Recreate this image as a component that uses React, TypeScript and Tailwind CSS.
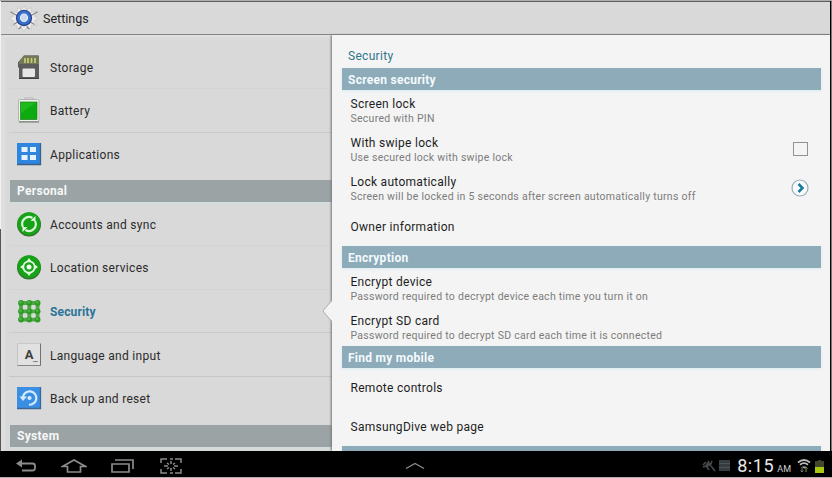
import type { ReactNode } from 'react';

const StorageIcon = () => (
  <svg width="26" height="26" viewBox="0 0 26 26">
    <path d="M8 1.500h14a1 1 0 0 1 1 1V24a1 1 0 0 1-1 1H4a1 1 0 0 1-1-1V14l-1-1V8l2-1z" fill="#5b5d5b" />
    <path d="M8 1.500h14a1 1 0 0 1 1 1V10H3V7z" fill="#73785a" />
    <path d="M9 4v5M12 4v5M15.500 4v5M19 4v5" stroke="#c9d070" strokeWidth="1.700" />
    <rect x="6.500" y="14.500" width="12.500" height="8.500" rx="1" fill="#e6e6e6" />
    <path d="M3 24.500h20" stroke="#3e3e3e" />
  </svg>
);

const BatteryIcon = () => (
  <svg width="26" height="26" viewBox="0 0 26 26">
    <path d="M9 3V1h8v2" fill="#eee" stroke="#b0b0b0" />
    <rect x="2.500" y="2.500" width="20.500" height="22" rx="1.500" fill="#eef3ee" stroke="#afb5af" />
    <path d="M3 25h20" stroke="#6d746d" />
    <rect x="4.500" y="5" width="16.500" height="17.500" fill="#0cab0f" stroke="#26791c" strokeWidth=".7" />
    <path d="M5 5.500h15L5 16z" fill="#1fba1c" />
  </svg>
);

const AppsIcon = () => (
  <svg width="26" height="26" viewBox="0 0 26 26">
    <rect x="1" y="2" width="24" height="22" fill="#2f86df" />
    <path d="M1 23.500h23.500V2" fill="none" stroke="#3d5f88" strokeWidth="1.300" />
    <path d="M5.500 6H11.500v5h-6zM14 6h6v5h-6zM5.500 14h6v5h-6zM14 14h6v5h-6z" fill="#e7f4ff" />
  </svg>
);

const SyncIcon = () => (
  <svg width="26" height="26" viewBox="0 0 26 26">
    <circle cx="13" cy="13.500" r="12" fill="#356f31" />
    <circle cx="13" cy="12.700" r="11.500" fill="#16a318" />
    <path d="M7 16A6.800 6.800 0 0 1 16.500 7M19 10A6.800 6.800 0 0 1 9.500 19" fill="none" stroke="#d9f5d3" strokeWidth="2.200" />
    <path d="M14.500 9.800L19.500 10V5zM11.500 16.200L6.500 16v5z" fill="#e5fbe0" />
  </svg>
);

const LocationIcon = () => (
  <svg width="26" height="26" viewBox="0 0 26 26">
    <circle cx="13" cy="13.500" r="12" fill="#356f31" />
    <circle cx="13" cy="12.700" r="11.500" fill="#16a318" />
    <circle cx="13" cy="13" r="5.700" fill="none" stroke="#e1f8dc" strokeWidth="1.800" />
    <circle cx="13" cy="13" r="2.500" fill="#f0fff0" />
    <path d="M13 4l2.500 3.500h-5zM13 22l2.500-3.500h-5zM4 13l3.500-2.500v5zM22 13l-3.500-2.500v5z" fill="#e1f8dc" />
  </svg>
);

const GRID = [5, 13.3, 21.6];

const SecurityIcon = () => (
  <svg width="26" height="26" viewBox="0 0 26 26">
    <path d="M5 5h17M5 13.300h17M5 21.600h17M5 5v17M13.300 5v17M21.600 5v17" stroke="#4fa845" strokeWidth="3.800" />
    {GRID.map((y) => GRID.map((x) => <circle key={`${x}-${y}`} cx={x} cy={y} r="2.900" fill="#2f9a28" />))}
    {GRID.map((y) => GRID.map((x) => <circle key={`${x}-${y}`} cx={x - 0.5} cy={y - 0.7} r="1.300" fill="#4fb544" />))}
  </svg>
);

const LanguageIcon = () => (
  <span className="relative flex h-[23px] w-[24px] items-center justify-center rounded-[1px] border-t border-r-[1.500px] border-b-[1.500px] border-l border-t-[#c9c9c9] border-r-[#707070] border-b-[#858585] border-l-[#c4c4c4] bg-[#e1e1e1] text-[13px] font-bold text-[#3f3f3f]">
    <span className="leading-none">A</span>
    <span className="absolute right-[2px] bottom-[2px] text-[7px] leading-[6px]">…</span>
  </span>
);

const BackupIcon = () => (
  <svg width="26" height="26" viewBox="0 0 26 26">
    <rect x="1" y="2" width="24" height="22" fill="#3a8ee4" />
    <path d="M1 23.500h23.500V2" fill="none" stroke="#3d6796" strokeWidth="1.300" />
    <path d="M7 12A6.700 6.700 0 1 1 13 19.700" fill="none" stroke="#d5ecff" strokeWidth="2.200" />
    <path d="M3.500 11.500h7.500L7 16z" fill="#d5ecff" />
    <circle cx="13.500" cy="13" r="2.100" fill="#d5ecff" />
  </svg>
);

const GearIcon = () => (
  <svg className="mt-[2px]" width="30" height="28" viewBox="0 0 28 28" preserveAspectRatio="none">
    <path
      d="M14 1l2.500 3.500 4-2 .5 4.500 6.500-.5-4 4.500 4 2.500-4 2.500 3 4.500-5.500-.5-.5 4.500-4-2L14 26.500 11.500 22.500l-4 2L7 20l-5.500.5 3-4.500-4-2.500 4-2.500-3.500-4.500L7.500 7 8 2.500l3.500 2z"
      fill="#ebebeb"
      stroke="#c2c2c2"
      strokeWidth=".7"
    />
    <path d="M1.500 7l6 3.500M26.500 7l-6 3.500M4 19.500l5-3M24 19.500l-5-3M9 24l2.500-2.500M19 24l-2.500-2.500" stroke="#858585" strokeWidth="1.200" />
    <ellipse cx="14" cy="13" rx="7.600" ry="8.300" fill="#27458c" />
    <ellipse cx="14" cy="12.800" rx="6.300" ry="7" fill="#3a70cf" />
    <ellipse cx="14" cy="12.800" rx="3.300" ry="3.800" fill="#cbd9ec" stroke="#e6eefa" />
  </svg>
);

type ItemProps = { icon: ReactNode; label: string; active?: boolean; tall?: boolean; low?: boolean; divider?: string };

function NavItem({ icon, label, active, tall, low, divider = 'border-[#d4d4d4]' }: ItemProps) {
  return (
    <div className={`ml-[8px] flex items-center border-b ${tall ? 'h-[44px]' : 'h-[43.500px]'} ${divider}`}>
      <span className="ml-[7px] flex w-[26px] justify-center">{icon}</span>
      <span
        className={`ml-[8px] text-[12px] whitespace-nowrap ${low ? 'pt-[3px]' : 'pt-[2px]'} ${active ? 'font-bold tracking-[0.15px] text-[#2a7398]' : 'tracking-[0.3px] text-[#2b2b2b]'}`}
      >
        {label}
      </span>
    </div>
  );
}

function NavHeading({ children }: { children: string }) {
  return (
    <div className="ml-[9px] flex h-[22px] items-center bg-[#9ba3a5] pl-[7px] text-[12px] font-bold tracking-[0.3px] text-[#f6f8f8] shadow-[0_2px_2px_#d3dde0]">
      {children}
    </div>
  );
}

function Heading({ children }: { children?: string }) {
  return (
    <div className="mr-[9px] ml-[10px] flex h-[22px] shrink-0 items-center bg-[#8dabb9] pt-[2px] pl-[6px] text-[12px] font-bold tracking-[0.27px] text-[#f4fafd] shadow-[0_1px_3px_#d9ebf2]">
      {children}
    </div>
  );
}

type PrefProps = { title: string; sub?: string; control?: ReactNode; height?: string };

function Pref({ title, sub, control, height = 'h-[39px]' }: PrefProps) {
  return (
    <div className={`flex shrink-0 items-center justify-between pr-[21px] pl-[18.500px] ${height}`}>
      <div className="whitespace-nowrap">
        <div className="text-[12px] leading-[15px] tracking-[0.29px] text-[#1e1e1e]">{title}</div>
        {sub && <div className="text-[10.500px] leading-[13px] tracking-[0.27px] text-[#7c7c7c]">{sub}</div>}
      </div>
      {control}
    </div>
  );
}

const Checkbox = () => <span className="mr-[1.500px] mb-[2px] h-[14px] w-[15px] border border-[#929292]" />;

const Chevron = () => (
  <svg className="mb-[2px]" width="18" height="18" viewBox="0 0 18 18" fill="none">
    <circle cx="9" cy="9" r="8" fill="#f7fbfc" stroke="#9aabb3" strokeWidth="1.200" />
    <path d="M7.500 5l4 4-4 4" stroke="#18799b" strokeWidth="2.500" />
  </svg>
);

function SystemBar() {
  return (
    <div className="flex h-[26px] shrink-0 items-center bg-black text-[#8b8b8b]">
      <svg className="mt-[5px] ml-[15px]" width="22" height="20" viewBox="0 0 22 20" fill="none" stroke="currentColor" strokeWidth="1.800">
        <path d="M4 6.500h13.500a2.500 2.500 0 0 1 2.500 2.500v2a2.500 2.500 0 0 1-2.500 2.500H7" />
        <path d="M7 2.500L1 6.500l6 4z" fill="currentColor" stroke="none" />
      </svg>
      <svg className="mt-[5px] ml-[24px]" width="26" height="20" viewBox="0 0 26 20" fill="none" stroke="currentColor" strokeWidth="1.700">
        <path d="M1.500 9.500L13 3l11.500 6.500h-5V15h-13V9.500z" />
      </svg>
      <svg className="mt-[5px] ml-[23px]" width="24" height="20" viewBox="0 0 24 20" fill="none" stroke="currentColor" strokeWidth="1.700">
        <path d="M2 7h17v8H2zM5 3h18v9" />
      </svg>
      <svg className="mt-[4px] ml-[25px]" width="24" height="20" viewBox="0 0 24 20" fill="none" stroke="currentColor" strokeWidth="1.500">
        <path d="M2 7V3h6M16 3h6v4M22 13v4h-6M8 17H2v-4M11 3h3M11 17h3M12 5v3M12 12v3M5 10h4M15 10h4M8 7l2 1.500M16 7l-2 1.500M8 13l2-1.500M16 13l-2-1.500" />
      </svg>
      <svg className="mt-[3px] ml-[221px]" width="22" height="10" viewBox="0 0 22 10" fill="none" stroke="currentColor" strokeWidth="1.400">
        <path d="M2 7.500L11 2.500l9 5" />
      </svg>
      <div className="mt-[4px] mr-[8px] ml-auto flex items-center">
        <svg width="30" height="16" viewBox="0 0 30 16" fill="none">
          <path d="M1 9l3-1 3-5M4 4L1 7M8 5l-3 4 2 3M9 8l4 5M10 3L8 8" stroke="#46494a" strokeWidth="1.700" />
          <path d="M17 2h11v11H17z" fill="#353d40" />
          <path d="M17 5.500h11M17 9.500h11" stroke="#4b5558" />
        </svg>
        <span className="ml-[5px] text-[18px] leading-[20px] tracking-[0.6px] text-[#e8e8e8]">8:15</span>
        <span className="mt-[6px] ml-[3px] text-[9px] leading-[10px] text-[#d0d0d0]">AM</span>
        <svg className="ml-[6px]" width="14" height="16" viewBox="0 0 14 16" fill="none">
          <path d="M1 4.500Q7-.5 13 4.500M3 6.800Q7 3.500 11 6.800" stroke="#bcbcbc" strokeWidth="1.800" />
          <path d="M5 8.500h4L7 10.500z" fill="#bcbcbc" />
          <path d="M5 9v5M3.500 12.500L5 14l1.500-1.500" stroke="#777" />
          <path d="M9 14V9M7.500 10.500L9 9l1.500 1.500" stroke="#7aa04b" />
        </svg>
        <svg className="ml-[4px]" width="9" height="13" viewBox="0 0 9 13">
          <path d="M3 0h3v1h3v6H0V1h3z" fill="#41482b" />
          <path d="M0 7h9v6H0z" fill="#a8c90e" />
        </svg>
      </div>
    </div>
  );
}

export default function App() {
  return (
    <div className="flex h-[478px] w-[832px] flex-col overflow-hidden border-t border-b border-[#aeaeae] bg-[#d9d9d9] [font-family:Roboto,'Liberation_Sans',sans-serif]">
      <div className="flex min-h-0 flex-1 overflow-hidden">
        <div className="flex w-px flex-col">
          <div className="h-[228px] bg-[#f4f4f4]" />
          <div className="flex-1 bg-[#555]" />
        </div>
        <div className="flex min-w-0 flex-1 flex-col">
          <header className="flex h-[34px] shrink-0 items-center border-t border-b border-t-[#5d6064] border-b-[#858585] pl-[8px]">
            <GearIcon />
            <h1 className="ml-[4px] pt-[2px] text-[12.500px] text-[#222]">Settings</h1>
          </header>
          <div className="flex min-h-0 flex-1">
            <nav className="w-[331px] shrink-0 overflow-hidden border-l-4 border-[#dedede] bg-[#d9d9d9] shadow-[inset_0_3px_3px_-1px_#e3e3e3]">
              <div className="-ml-1 pt-[10px]">
                <NavItem tall icon={<StorageIcon />} label="Storage" />
                <NavItem icon={<BatteryIcon />} label="Battery" divider="border-[#cbcbcb]" />
                <NavItem low icon={<AppsIcon />} label="Applications" divider="border-transparent" />
                <div className="h-[4px]" />
                <NavHeading>Personal</NavHeading>
                <NavItem tall icon={<SyncIcon />} label="Accounts and sync" />
                <NavItem icon={<LocationIcon />} label="Location services" />
                <NavItem low active icon={<SecurityIcon />} label="Security" divider="border-[#cbcbcb]" />
                <NavItem tall icon={<LanguageIcon />} label="Language and input" divider="border-[#c6c6c6]" />
                <NavItem icon={<BackupIcon />} label="Back up and reset" divider="border-transparent" />
                <div className="h-[4.500px]" />
                <NavHeading>System</NavHeading>
              </div>
            </nav>
            <main className="relative flex min-w-0 flex-1 flex-col bg-[#f4f4f4] shadow-[-1px_0_2px_#777]">
              <svg className="absolute top-[265px] -left-[10px]" width="11" height="22" viewBox="0 0 11 22">
                <path d="M11 0L1 11l10 11z" fill="#f4f4f4" />
                <path d="M10 0L1 11l9 11" fill="none" stroke="#b2b2b2" />
              </svg>
              <div className="flex h-[33px] shrink-0 items-center pt-[9px] pl-[16px] text-[12px] tracking-[0.3px] text-[#327489]">Security</div>
              <Heading>Screen security</Heading>
              <Pref title="Screen lock" sub="Secured with PIN" height="h-[41px]" />
              <Pref title="With swipe lock" sub="Use secured lock with swipe lock" control={<Checkbox />} height="h-[38px]" />
              <Pref title="Lock automatically" sub="Screen will be locked in 5 seconds after screen automatically turns off" control={<Chevron />} />
              <Pref title="Owner information" height="h-[38px] pt-px" />
              <Heading>Encryption</Heading>
              <Pref title="Encrypt device" sub="Password required to decrypt device each time you turn it on" height="h-[40px] pt-[2px]" />
              <Pref title="Encrypt SD card" sub="Password required to decrypt SD card each time it is connected" height="h-[38px] pt-[2px]" />
              <Heading>Find my mobile</Heading>
              <Pref title="Remote controls" height="h-[39px] pt-[2px]" />
              <Pref title="SamsungDive web page" height="h-[39px] pt-[2px]" />
              <Heading />
            </main>
          </div>
        </div>
        <div className="w-px bg-black" />
        <div className="w-px bg-[#777]" />
      </div>
      <SystemBar />
    </div>
  );
}
